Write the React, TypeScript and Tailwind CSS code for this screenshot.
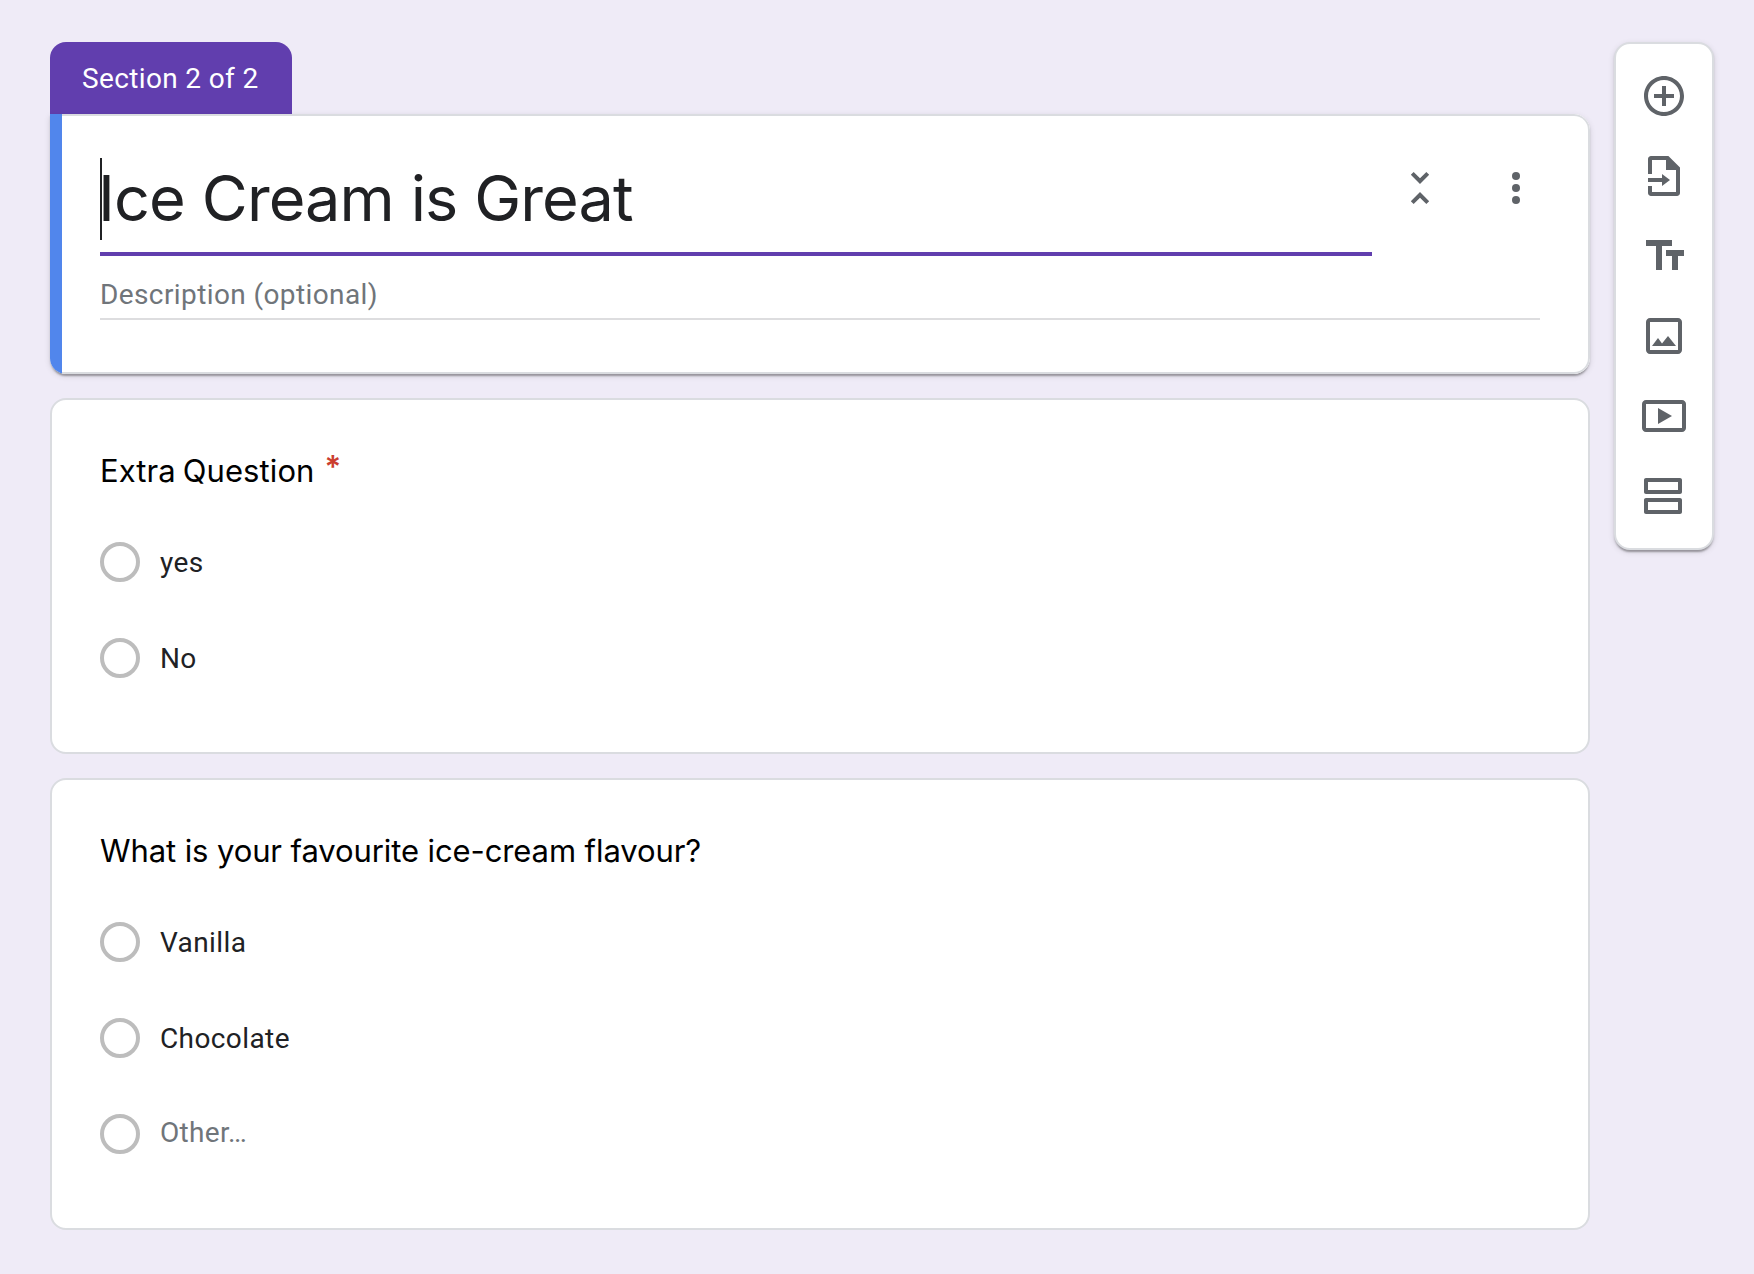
import type { ReactNode } from 'react'

const cardShadow =
  'shadow-[0_4px_2px_-2px_rgba(0,0,0,0.2),0_2px_2px_0_rgba(0,0,0,0.14),0_2px_6px_0_rgba(0,0,0,0.12)]'

function Icon({ children }: { children: ReactNode }) {
  return (
    <svg viewBox="0 0 24 24" className="block size-12 shrink-0 fill-[#5f6368]">
      {children}
    </svg>
  )
}

function Option({ label, other = false }: { label: string; other?: boolean }) {
  return (
    <div className="flex h-10 items-center gap-5">
      <span className="size-10 shrink-0 rounded-full border-4 border-[#bdbdbd]" />
      <span
        className={
          other
            ? 'pb-0.5 text-[28px] leading-10 tracking-[0.3px] text-[#70757a]'
            : 'pt-0.5 text-[28px] leading-10 tracking-[0.4px] text-[#202124]'
        }
      >
        {label}
      </span>
    </div>
  )
}

function SectionHeader() {
  return (
    <section>
      <div className="flex h-[72px] w-[242px] items-center rounded-t-2xl bg-[#613eae] pl-8 pt-0.5 text-[28px] tracking-[0.36px] text-white">
        Section 2 of 2
      </div>
      <div
        className={`flex h-[260px] overflow-hidden rounded-r-2xl rounded-bl-2xl bg-white ${cardShadow}`}
      >
        <div className="w-3 shrink-0 bg-[#5186ec]" />
        <div className="flex-1 rounded-r-2xl border-y-2 border-r-2 border-[#dadce0] pl-[38px] pr-12 pt-[42px]">
          <div className="flex justify-between">
            <div className="flex h-[98px] w-[1272px] items-start border-b-4 border-[#613eae]">
              <span className="h-[82px] w-0.5 bg-[#202124]" />
              <span className="-ml-1 whitespace-nowrap font-[Inter] text-[63px] leading-[80px] tracking-[-0.9px] text-[#202124]">
                Ice Cream is Great
              </span>
            </div>
            <div className="flex gap-12 pt-1.5">
              <Icon>
                <path d="M7.41 18.59 8.83 20 12 16.83 15.17 20l1.41-1.41L12 14l-4.59 4.59zm9.18-13.18L15.17 4 12 7.17 8.83 4 7.41 5.41 12 10l4.59-4.59z" />
              </Icon>
              <Icon>
                <circle cx="12" cy="6" r="2" />
                <circle cx="12" cy="12" r="2" />
                <circle cx="12" cy="18" r="2" />
              </Icon>
            </div>
          </div>
          <div className="mt-4 h-12 border-b-2 border-[#dddddf] text-[28px] leading-[46px] tracking-[0.4px] text-[#70757a]">
            Description (optional)
          </div>
        </div>
      </div>
    </section>
  )
}

function Question({ className, children }: { className: string; children: ReactNode }) {
  return (
    <section
      className={`mt-6 rounded-2xl border-2 border-[#dadce0] bg-white px-12 pt-12 ${className}`}
    >
      {children}
    </section>
  )
}

function Toolbar() {
  return (
    <aside
      className={`flex h-[508px] w-[100px] flex-col items-center gap-8 rounded-2xl border-2 border-[#dadce0] bg-white pt-7 ${cardShadow}`}
    >
      <Icon>
        <path d="M13 7h-2v4H7v2h4v4h2v-4h4v-2h-4V7zm-1-5C6.48 2 2 6.48 2 12s4.48 10 10 10 10-4.48 10-10S17.52 2 12 2zm0 18c-4.41 0-8-3.59-8-8s3.59-8 8-8 8 3.59 8 8-3.59 8-8 8z" />
      </Icon>
      <Icon>
        <path d="M14.2 2H5.5C4.67 2 4 2.67 4 3.5V11h2V4h7v5h5v11H6v-3H4v3.500c0 .830.670 1.500 1.500 1.500h13c.830 0 1.500-.670 1.500-1.500V7.800z" />
        <path d="M4 13h7v-2l4 3-4 3v-2H4z" />
      </Icon>
      <Icon>
        <path d="M3 4v3h5v12h3V7h5V4H3zm19 5h-9v3h3v7h3v-7h3V9z" />
      </Icon>
      <Icon>
        <path d="M19 5v14H5V5h14m0-2H5c-1.100 0-2 .9-2 2v14c0 1.100.9 2 2 2h14c1.100 0 2-.9 2-2V5c0-1.100-.9-2-2-2zM6 17h12l-4-5-3 3.700L9 13z" />
      </Icon>
      <Icon>
        <path d="M21 4H3c-1.100 0-2 .9-2 2v12c0 1.100.9 2 2 2h18c1.100 0 2-.9 2-2V6c0-1.100-.9-2-2-2zm0 14H3V6h18v12zM9 8v8l7-4z" />
      </Icon>
      <Icon>
        <path d="M20 13H3c-.550 0-1 .450-1 1v6c0 .550.450 1 1 1h17c.550 0 1-.450 1-1v-6c0-.550-.450-1-1-1zm-1 6H4v-4h15zM20 3H3c-.550 0-1 .450-1 1v6c0 .550.450 1 1 1h17c.550 0 1-.450 1-1V4c0-.550-.450-1-1-1zm-1 6H4V5h15z" />
      </Icon>
    </aside>
  )
}

export default function App() {
  return (
    <div className="flex h-[1274px] w-[1754px] items-start gap-6 overflow-hidden bg-[#efebf7] pl-[50px] pt-[42px] font-[Roboto,sans-serif]">
      <main className="w-[1540px]">
        <SectionHeader />
        <Question className="h-[356px]">
          <h2 className="flex h-12 font-[Inter] text-[31px] leading-[46px] tracking-[0.1px] text-black [word-spacing:-2px]">
            Extra Question
            <span className="-mt-1 ml-2.5 font-semibold text-[#cb3e2f]">*</span>
          </h2>
          <div className="mt-[46px] flex flex-col gap-14">
            <Option label="yes" />
            <Option label="No" />
          </div>
        </Question>
        <Question className="h-[452px]">
          <h2 className="h-12 font-[Inter] text-[31px] leading-[46px] tracking-[-0.1px] text-black">
            What is your favourite ice-cream flavour?
          </h2>
          <div className="mt-[46px] flex flex-col gap-14">
            <Option label="Vanilla" />
            <Option label="Chocolate" />
            <Option label="Other…" other />
          </div>
        </Question>
      </main>
      <Toolbar />
    </div>
  )
}
